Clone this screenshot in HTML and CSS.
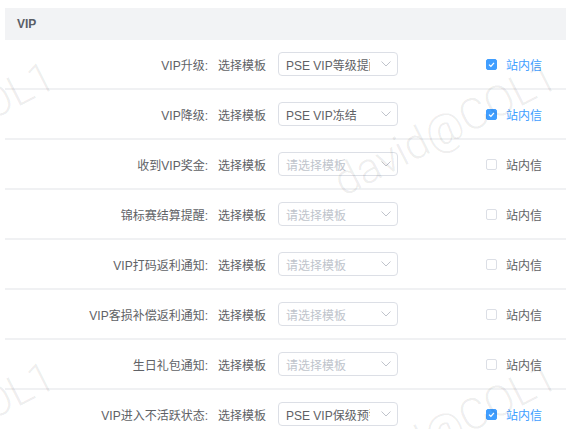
FILE: index.html
```html
<!DOCTYPE html>
<html lang="zh-CN">
<head>
<meta charset="utf-8">
<title>VIP</title>
<link rel="stylesheet" href="styles.css">
</head>
<body>
<div class="page">
  <div class="section-head">VIP</div>

  <div class="row">
    <div class="label">VIP升级:</div>
    <span class="field-name">选择模板</span>
    <div class="select"><span class="select-value">PSE VIP等级提醒</span><svg class="arrow" viewBox="0 0 10 6" width="10" height="6"><polyline points="0.5,0.5 5,5 9.5,0.5" fill="none" stroke="#c0c4cc" stroke-width="1"/></svg></div>
    <div class="check checked"><span class="box"><svg viewBox="0 0 11 11" width="11" height="11"><polyline points="3,5.6 4.9,7.4 8,3.8" fill="none" stroke="#fff" stroke-width="1.3"/></svg></span><span class="check-text">站内信</span></div>
  </div>

  <div class="row">
    <div class="label">VIP降级:</div>
    <span class="field-name">选择模板</span>
    <div class="select"><span class="select-value">PSE VIP冻结</span><svg class="arrow" viewBox="0 0 10 6" width="10" height="6"><polyline points="0.5,0.5 5,5 9.5,0.5" fill="none" stroke="#c0c4cc" stroke-width="1"/></svg></div>
    <div class="check checked"><span class="box"><svg viewBox="0 0 11 11" width="11" height="11"><polyline points="3,5.6 4.9,7.4 8,3.8" fill="none" stroke="#fff" stroke-width="1.3"/></svg></span><span class="check-text">站内信</span></div>
  </div>

  <div class="row">
    <div class="label">收到VIP奖金:</div>
    <span class="field-name">选择模板</span>
    <div class="select"><span class="select-value placeholder">请选择模板</span><svg class="arrow" viewBox="0 0 10 6" width="10" height="6"><polyline points="0.5,0.5 5,5 9.5,0.5" fill="none" stroke="#c0c4cc" stroke-width="1"/></svg></div>
    <div class="check"><span class="box"></span><span class="check-text">站内信</span></div>
  </div>

  <div class="row">
    <div class="label">锦标赛结算提醒:</div>
    <span class="field-name">选择模板</span>
    <div class="select"><span class="select-value placeholder">请选择模板</span><svg class="arrow" viewBox="0 0 10 6" width="10" height="6"><polyline points="0.5,0.5 5,5 9.5,0.5" fill="none" stroke="#c0c4cc" stroke-width="1"/></svg></div>
    <div class="check"><span class="box"></span><span class="check-text">站内信</span></div>
  </div>

  <div class="row">
    <div class="label">VIP打码返利通知:</div>
    <span class="field-name">选择模板</span>
    <div class="select"><span class="select-value placeholder">请选择模板</span><svg class="arrow" viewBox="0 0 10 6" width="10" height="6"><polyline points="0.5,0.5 5,5 9.5,0.5" fill="none" stroke="#c0c4cc" stroke-width="1"/></svg></div>
    <div class="check"><span class="box"></span><span class="check-text">站内信</span></div>
  </div>

  <div class="row">
    <div class="label">VIP客损补偿返利通知:</div>
    <span class="field-name">选择模板</span>
    <div class="select"><span class="select-value placeholder">请选择模板</span><svg class="arrow" viewBox="0 0 10 6" width="10" height="6"><polyline points="0.5,0.5 5,5 9.5,0.5" fill="none" stroke="#c0c4cc" stroke-width="1"/></svg></div>
    <div class="check"><span class="box"></span><span class="check-text">站内信</span></div>
  </div>

  <div class="row">
    <div class="label">生日礼包通知:</div>
    <span class="field-name">选择模板</span>
    <div class="select"><span class="select-value placeholder">请选择模板</span><svg class="arrow" viewBox="0 0 10 6" width="10" height="6"><polyline points="0.5,0.5 5,5 9.5,0.5" fill="none" stroke="#c0c4cc" stroke-width="1"/></svg></div>
    <div class="check"><span class="box"></span><span class="check-text">站内信</span></div>
  </div>

  <div class="row">
    <div class="label">VIP进入不活跃状态:</div>
    <span class="field-name">选择模板</span>
    <div class="select"><span class="select-value">PSE VIP保级预警</span><svg class="arrow" viewBox="0 0 10 6" width="10" height="6"><polyline points="0.5,0.5 5,5 9.5,0.5" fill="none" stroke="#c0c4cc" stroke-width="1"/></svg></div>
    <div class="check checked"><span class="box"><svg viewBox="0 0 11 11" width="11" height="11"><polyline points="3,5.6 4.9,7.4 8,3.8" fill="none" stroke="#fff" stroke-width="1.3"/></svg></span><span class="check-text">站内信</span></div>
  </div>
</div>

<div class="watermark" aria-hidden="true">
  <span class="wm wm-a">david@COL1</span>
  <span class="wm wm-b">david@COL1</span>
  <span class="wm wm-c">david@COL1</span>
  <span class="wm wm-d">david@COL1</span>
</div>
</body>
</html>
```

FILE: styles.css
```css
html, body {
  margin: 0;
  padding: 0;
  background: #ffffff;
  overflow: hidden;
}

body {
  width: 566px;
  height: 429px;
  position: relative;
  font-family: "Liberation Sans", "Noto Sans CJK SC", sans-serif;
  font-size: 12px;
  color: #606266;
}

.page {
  padding: 8px 0 0 5px;
}

.section-head {
  height: 32px;
  line-height: 32px;
  background: #f2f3f5;
  padding-left: 12px;
  font-weight: bold;
  font-size: 12px;
  color: #5a5e66;
}

.row {
  height: 48px;
  border-bottom: 2px solid #f0f1f3;
  display: flex;
  align-items: center;
}

.label {
  width: 213px;
  box-sizing: border-box;
  padding-right: 10px;
  text-align: right;
  white-space: nowrap;
  flex: none;
}

.field-name {
  margin-right: 12px;
  white-space: nowrap;
}

.select {
  width: 120px;
  height: 24px;
  box-sizing: border-box;
  border: 1px solid #dcdfe6;
  border-radius: 4px;
  display: flex;
  align-items: center;
  position: relative;
  flex: none;
}

.select-value {
  display: block;
  margin-left: 7px;
  width: 84px;
  overflow: hidden;
  white-space: nowrap;
  color: #606266;
}

.select-value.placeholder {
  color: #c0c4cc;
}

.arrow {
  margin-left: auto;
  margin-right: 6px;
}

.check {
  margin-left: 88px;
  display: flex;
  align-items: center;
}

.box {
  width: 11px;
  height: 11px;
  box-sizing: border-box;
  border: 1px solid #dcdfe6;
  border-radius: 2px;
  background: #fff;
  display: block;
  position: relative;
}

.box svg {
  position: absolute;
  left: -1px;
  top: -1px;
}

.check.checked .box {
  background: #409eff;
  border-color: #409eff;
}

.check-text {
  margin-left: 9px;
  color: #606266;
}

.check.checked .check-text {
  color: #409eff;
}

.watermark {
  position: absolute;
  left: 0;
  top: 0;
  width: 566px;
  height: 429px;
  pointer-events: none;
  overflow: hidden;
}

.wm {
  position: absolute;
  font-family: Roboto, "Liberation Sans", sans-serif;
  font-weight: 300;
  font-size: 43px;
  line-height: 43px;
  white-space: nowrap;
  color: rgba(0, 0, 0, 0.075);
  transform-origin: 100% 50%;
  transform: rotate(-27deg);
}

.wm-a { right: 12px; top: 52px; }
.wm-b { right: 12px; top: 352px; }
.wm-c { right: 514px; top: 52px; }
.wm-d { right: 514px; top: 352px; }
```
